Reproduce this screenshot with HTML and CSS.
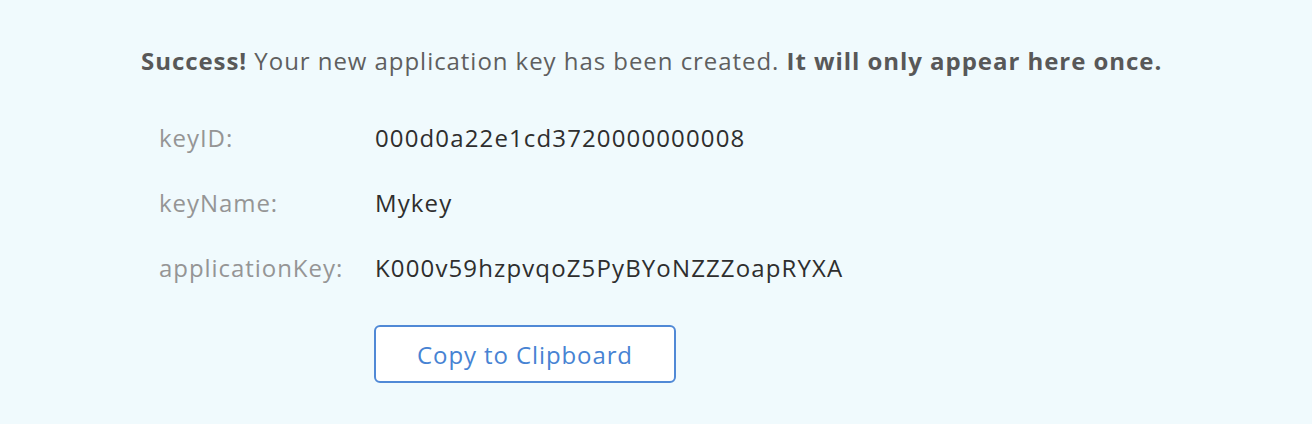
FILE: index.html
```html
<!DOCTYPE html>
<html>
<head>
<meta charset="utf-8">
<link rel="stylesheet" href="styles.css">
</head>
<body>
<div class="panel">
  <p class="message"><strong>Success!</strong> Your new application key has been created. <strong>It will only appear here once.</strong></p>
  <div class="rows">
    <div class="row"><span class="label">keyID:</span><span class="value">000d0a22e1cd3720000000008</span></div>
    <div class="row"><span class="label">keyName:</span><span class="value">Mykey</span></div>
    <div class="row"><span class="label">applicationKey:</span><span class="value">K000v59hzpvqoZ5PyBYoNZZZoapRYXA</span></div>
  </div>
  <div class="actions">
    <button class="copy">Copy to Clipboard</button>
  </div>
</div>
</body>
</html>
```
FILE: styles.css
```css
html, body {
  margin: 0;
  padding: 0;
  background: #f0fafd;
}
body {
  font-family: "Open Sans", "Liberation Sans", sans-serif;
  font-size: 24px;
  letter-spacing: 0.95px;
  width: 1312px;
  height: 424px;
  overflow: hidden;
}
.panel {
  padding: 45px 0 0 141px;
}
.message {
  margin: 0;
  color: #5f5f5f;
  line-height: 32px;
}
.message strong {
  font-weight: 700;
  color: #585858;
}
.rows {
  margin-top: 45px;
  display: flex;
  flex-direction: column;
  gap: 33px;
}
.row {
  display: flex;
  line-height: 32px;
}
.label {
  width: 216px;
  padding-left: 18px;
  color: #959595;
}
.value {
  color: #2e2e2e;
  letter-spacing: 1.13px;
}
.actions {
  padding-left: 233px;
  margin-top: 41px;
}
.copy {
  width: 302px;
  height: 58px;
  background: #ffffff;
  border: 2px solid #5089d6;
  border-radius: 6px;
  color: #4783d3;
  font-family: inherit;
  font-size: 24px;
  letter-spacing: 0.9px;
  padding: 0;
}
```
